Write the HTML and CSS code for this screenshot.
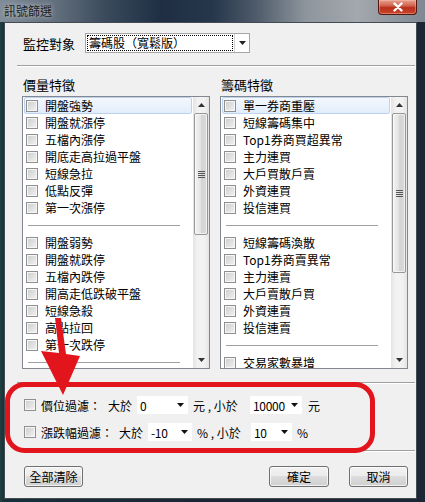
FILE: index.html
```html
<!DOCTYPE html>
<html lang="zh-Hant">
<head>
    <meta charset="UTF-8">
    <title>訊號篩選</title>
    <link rel="stylesheet" href="styles.css">
</head>
<body>
<div class="screen">
    <!-- 標題列 -->
    <div class="titlebar">
        <span class="title">訊號篩選</span>
        <span class="close">
            <svg width="12" height="10" viewBox="0 0 12 10"><path d="M2.5 1.5 L9.5 8.5 M9.5 1.5 L2.5 8.5" stroke="#fff" stroke-width="2.4" stroke-linecap="round"/></svg>
        </span>
    </div>

    <div class="client">
        <div class="target-row">
            <span class="target-label">監控對象</span>
            <div class="combo">
                <span class="combo-text"><span class="focus">籌碼股（寬鬆版）</span></span>
                <span class="combo-btn"><svg width="7" height="4" viewBox="0 0 7 4"><path d="M0 0 H7 L3.5 4 Z" fill="#222"/></svg></span>
            </div>
        </div>
        <div class="etched"></div>

        <div class="groups">
            <div class="group">
                <div class="group-title">價量特徵</div>
                <div class="listbox">
                    <div class="items">
                        <div class="item selected"><span class="cb"></span>開盤強勢</div>
                        <div class="item"><span class="cb"></span>開盤就漲停</div>
                        <div class="item"><span class="cb"></span>五檔內漲停</div>
                        <div class="item"><span class="cb"></span>開底走高拉過平盤</div>
                        <div class="item"><span class="cb"></span>短線急拉</div>
                        <div class="item"><span class="cb"></span>低點反彈</div>
                        <div class="item"><span class="cb"></span>第一次漲停</div>
                        <div class="sep"></div>
                        <div class="item"><span class="cb"></span>開盤弱勢</div>
                        <div class="item"><span class="cb"></span>開盤就跌停</div>
                        <div class="item"><span class="cb"></span>五檔內跌停</div>
                        <div class="item"><span class="cb"></span>開高走低跌破平盤</div>
                        <div class="item"><span class="cb"></span>短線急殺</div>
                        <div class="item"><span class="cb"></span>高點拉回</div>
                        <div class="item"><span class="cb"></span>第一次跌停</div>
                        <div class="sep"></div>
                    </div>
                    <div class="vscroll">
                        <div class="sb-btn"><svg width="7" height="4" viewBox="0 0 7 4"><path d="M0 4 H7 L3.5 0 Z" fill="#333"/></svg></div>
                        <div class="thumb thumb-left"><svg width="7" height="7" viewBox="0 0 7 7"><path d="M0 0.5 H7 M0 2.5 H7 M0 4.5 H7 M0 6.5 H7" stroke="#555" stroke-width="1"/></svg></div>
                        <div class="sb-track"></div>
                        <div class="sb-btn"><svg width="7" height="4" viewBox="0 0 7 4"><path d="M0 0 H7 L3.5 4 Z" fill="#333"/></svg></div>
                    </div>
                </div>
            </div>

            <div class="group">
                <div class="group-title">籌碼特徵</div>
                <div class="listbox">
                    <div class="items">
                        <div class="item selected"><span class="cb"></span>單一券商重壓</div>
                        <div class="item"><span class="cb"></span>短線籌碼集中</div>
                        <div class="item"><span class="cb"></span>Top1券商買超異常</div>
                        <div class="item"><span class="cb"></span>主力連買</div>
                        <div class="item"><span class="cb"></span>大戶買散戶賣</div>
                        <div class="item"><span class="cb"></span>外資連買</div>
                        <div class="item"><span class="cb"></span>投信連買</div>
                        <div class="sep"></div>
                        <div class="item"><span class="cb"></span>短線籌碼渙散</div>
                        <div class="item"><span class="cb"></span>Top1券商賣異常</div>
                        <div class="item"><span class="cb"></span>主力連賣</div>
                        <div class="item"><span class="cb"></span>大戶賣散戶買</div>
                        <div class="item"><span class="cb"></span>外資連賣</div>
                        <div class="item"><span class="cb"></span>投信連賣</div>
                        <div class="sep"></div>
                        <div class="item"><span class="cb"></span>交易家數暴增</div>
                    </div>
                    <div class="vscroll">
                        <div class="sb-btn"><svg width="7" height="4" viewBox="0 0 7 4"><path d="M0 4 H7 L3.5 0 Z" fill="#333"/></svg></div>
                        <div class="thumb thumb-right"><svg width="7" height="7" viewBox="0 0 7 7"><path d="M0 0.5 H7 M0 2.5 H7 M0 4.5 H7 M0 6.5 H7" stroke="#555" stroke-width="1"/></svg></div>
                        <div class="sb-track"></div>
                        <div class="sb-btn"><svg width="7" height="4" viewBox="0 0 7 4"><path d="M0 0 H7 L3.5 4 Z" fill="#333"/></svg></div>
                    </div>
                </div>
            </div>
        </div>
        <div class="etched etched-mid"></div>

        <!-- 價位 / 漲跌幅過濾 -->
        <div class="filters">
            <div class="filter-row">
                <span class="cb cb-filter"></span>
                <span class="f-label price-label">價位過濾：</span>
                <span class="f-text gt-price">大於</span>
                <span class="dd dd-price-min">0<svg width="7" height="4" viewBox="0 0 7 4"><path d="M0 0 H7 L3.5 4 Z" fill="#111"/></svg></span>
                <span class="f-text unit-price">元 , 小於</span>
                <span class="dd dd-price-max">10000<svg width="7" height="4" viewBox="0 0 7 4"><path d="M0 0 H7 L3.5 4 Z" fill="#111"/></svg></span>
                <span class="f-text unit-end">元</span>
            </div>
            <div class="filter-row">
                <span class="cb cb-filter"></span>
                <span class="f-label pct-label">漲跌幅過濾：</span>
                <span class="f-text gt-pct">大於</span>
                <span class="dd dd-pct-min">-10<svg width="7" height="4" viewBox="0 0 7 4"><path d="M0 0 H7 L3.5 4 Z" fill="#111"/></svg></span>
                <span class="f-text unit-pct">% , 小於</span>
                <span class="dd dd-pct-max">10<svg width="7" height="4" viewBox="0 0 7 4"><path d="M0 0 H7 L3.5 4 Z" fill="#111"/></svg></span>
                <span class="f-text unit-end-pct">%</span>
            </div>
        </div>
        <div class="etched etched-low"></div>

        <div class="buttons">
            <button class="btn btn-clear">全部清除</button>
            <div class="spacer"></div>
            <button class="btn btn-ok">確定</button>
            <button class="btn btn-cancel">取消</button>
        </div>
    </div>

    <!-- 紅色標註 -->
    <svg class="annot" width="425" height="502" viewBox="0 0 425 502">
        <rect x="7.5" y="384.5" width="365" height="66" rx="17" fill="none" stroke="#e3151c" stroke-width="5"/>
        <polygon points="55,318 61,318 66,354 80,356 63,395 41,351 59,353" fill="#e3151c"/>
    </svg>
</div>
</body>
</html>
```

FILE: styles.css
```css
* {
    box-sizing: border-box;
    margin: 0;
    padding: 0;
}

body {
    width: 425px;
    height: 502px;
    overflow: hidden;
    font-family: "Noto Sans CJK TC", "Noto Sans", sans-serif;
    font-size: 12px;
    color: #000;
}

.screen {
    position: relative;
    width: 425px;
    height: 502px;
    background: linear-gradient(to right, #21403f 0, #18303a 4px, #1b2533 50%, #1c2736 100%);
    display: flex;
    flex-direction: column;
}

/* 標題列 */
.titlebar {
    height: 22px;
    flex: none;
    display: flex;
    justify-content: space-between;
    align-items: flex-start;
    background: linear-gradient(to right, #808d99 0%, #66727f 12%, #3a4a5c 25%, #1f2e43 38%, #26364b 50%, #4d5a69 60%, #8e959d 72%, #a4a8ad 84%, #7f8893 100%);
}

.title {
    padding: 3px 0 0 4px;
    line-height: 15px;
    font-size: 12px;
    color: #1c1c1c;
    text-shadow: 0 0 5px rgba(255, 255, 255, 0.7);
}

.close {
    width: 39px;
    height: 15px;
    margin-right: 8px;
    border: 1px solid #53190f;
    border-top: none;
    border-radius: 0 0 4px 4px;
    background: linear-gradient(#e6a391 0%, #d2644f 40%, #b8301b 55%, #c8462c 100%);
    box-shadow: inset 0 0 0 1px rgba(255, 200, 180, 0.4);
    display: flex;
    align-items: center;
    justify-content: center;
}

/* 視窗內容 */
.client {
    margin-left: 4px;
    width: 413px;
    height: 477px;
    background: #f0f0f0;
    border: 1px solid #454b53;
    display: flex;
    flex-direction: column;
}

.target-row {
    display: flex;
    align-items: center;
    padding: 10px 0 0 18px;
    height: 30px;
}

.target-label {
    width: 62px;
    font-size: 13px;
}

.combo {
    width: 165px;
    height: 20px;
    border: 1px solid #a6a6a6;
    background: #fff;
    display: flex;
}

.combo-text {
    flex: 1;
    padding: 1px;
}

.focus {
    display: block;
    height: 100%;
    border: 1px dotted #000;
    padding-left: 1px;
    line-height: 14px;
}

.combo-btn {
    width: 15px;
    border-left: 1px solid #d2d2d2;
    display: flex;
    align-items: center;
    justify-content: center;
}

.etched {
    height: 2px;
    border-top: 1px solid #a0a0a0;
    border-bottom: 1px solid #fff;
    margin: 12px 1px 0 12px;
}

.etched-mid {
    margin-top: 13px;
}

.etched-low {
    margin-top: 9px;
}

/* 特徵清單 */
.groups {
    display: flex;
    gap: 10px;
    padding: 9px 0 0 17px;
}

.group-title {
    line-height: 17px;
    padding-left: 1px;
    margin-bottom: 3px;
    font-size: 13px;
}

.listbox {
    width: 188px;
    height: 273px;
    border: 1px solid #828790;
    background: #fff;
    display: flex;
    overflow: hidden;
}

.items {
    flex: 1;
    overflow: hidden;
}

.item {
    height: 17px;
    display: flex;
    align-items: center;
    gap: 7px;
    padding-left: 3px;
    white-space: nowrap;
    line-height: 17px;
}

.item.selected {
    margin: 0 1px;
    padding-left: 1px;
    border: 1px solid #bcd3f0;
    border-radius: 2px;
    background: linear-gradient(#f4f8fe, #e2edfb);
}

.sep {
    height: 18px;
    display: flex;
    align-items: center;
    margin: 0 13px 0 5px;
}

.sep::before {
    content: "";
    flex: 1;
    border-top: 1px solid #a0a0a0;
}

.cb {
    flex: none;
    width: 12px;
    height: 12px;
    border: 1px solid #8f8f8f;
    background: linear-gradient(135deg, #cbcccd, #f3f3f3);
    box-shadow: inset 0 0 0 1px #f6f6f6;
}

/* 捲軸 */
.vscroll {
    width: 16px;
    flex: none;
    display: flex;
    flex-direction: column;
    background: linear-gradient(to right, #e4e4e4 0%, #f2f2f2 30%, #f2f2f2 70%, #e4e4e4 100%);
}

.sb-btn {
    height: 16px;
    flex: none;
    display: flex;
    align-items: center;
    justify-content: center;
}

.thumb {
    flex: none;
    margin: 0 1px;
    border: 1px solid #979797;
    border-radius: 2px;
    background: linear-gradient(to right, #f3f3f3, #e4e4e4 45%, #d4d4d4 55%, #dadada);
    box-shadow: inset 0 0 0 1px rgba(255, 255, 255, 0.6);
    display: flex;
    align-items: center;
    justify-content: center;
}

.thumb-left {
    height: 122px;
}

.thumb-right {
    height: 160px;
}

.sb-track {
    flex: 1;
}

/* 過濾條件 */
.filters {
    display: flex;
    flex-direction: column;
    gap: 9px;
    padding: 12px 0 0 19px;
}

.filter-row {
    height: 18px;
    display: flex;
    align-items: center;
    white-space: nowrap;
}

.cb-filter {
    margin-right: 5px;
}

.price-label { width: 67px; }
.pct-label { width: 78px; }
.gt-price, .gt-pct { width: 29px; }

.dd {
    height: 18px;
    background: #fff;
    display: flex;
    align-items: center;
    justify-content: space-between;
    padding: 0 4px 0 3px;
    letter-spacing: -0.3px;
}

.dd-price-min { width: 51px; }
.dd-price-max { width: 52px; }
.dd-pct-min { width: 44px; }
.dd-pct-max { width: 41px; }

.unit-price { width: 62px; padding-left: 5px; }
.unit-pct { width: 59px; padding-left: 5px; }
.unit-end { padding-left: 6px; }
.unit-end-pct { padding-left: 5px; }

/* 按鈕 */
.buttons {
    display: flex;
    gap: 20px;
    padding: 14px 8px 0 19px;
}

.spacer {
    flex: 1;
}

.btn {
    height: 21px;
    width: 60px;
    border: 1px solid #707070;
    border-radius: 3px;
    background: linear-gradient(#f2f2f2 0%, #ebebeb 50%, #dddddd 50%, #cfcfcf 100%);
    box-shadow: inset 0 0 0 1px rgba(255, 255, 255, 0.7);
    font-family: inherit;
    font-size: 12px;
    color: #000;
    display: flex;
    align-items: center;
    justify-content: center;
}

.btn-clear,
.btn-cancel {
    width: 59px;
}

.annot {
    position: absolute;
    top: 0;
    left: 0;
    pointer-events: none;
}
```
